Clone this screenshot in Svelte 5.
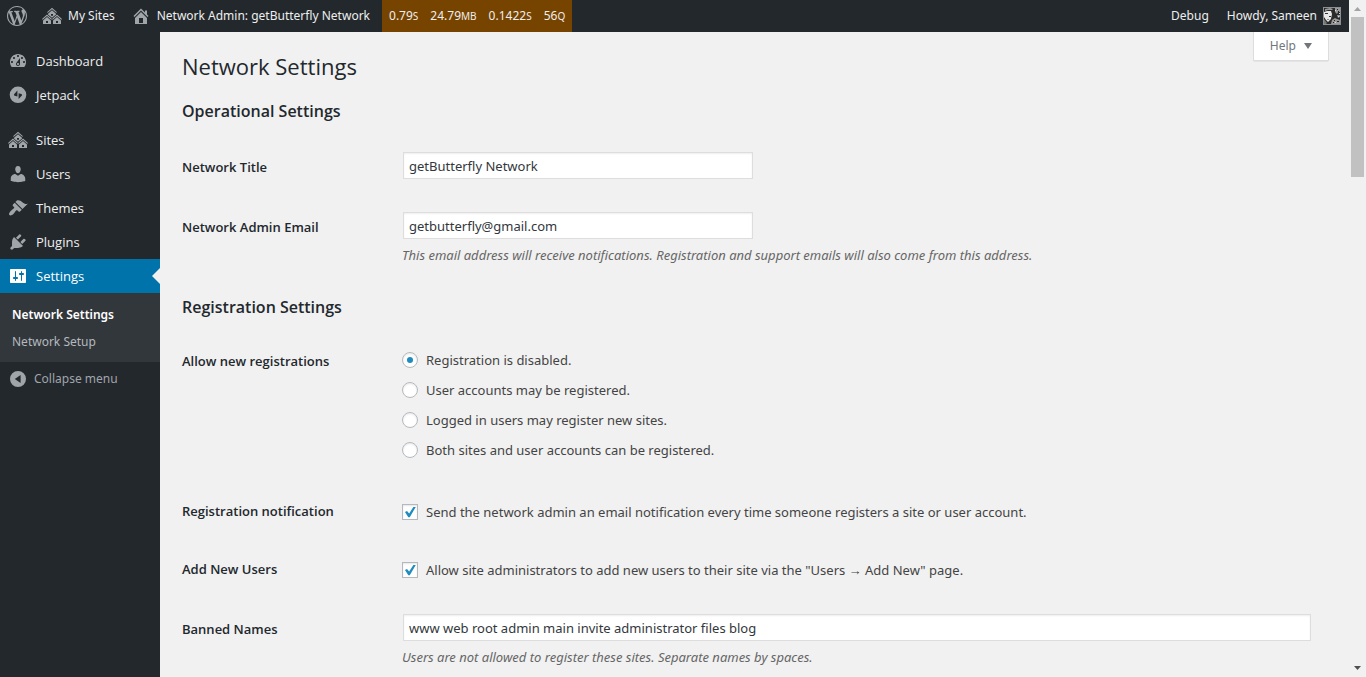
<script>
  const icons = {
    wordpress: 'M20 10c0-5.51-4.49-10-10-10C4.48 0 0 4.49 0 10c0 5.52 4.48 10 10 10 5.51 0 10-4.48 10-10zM7.78 15.37L4.37 6.22c.55-.02 1.17-.08 1.17-.08.5-.06.44-1.13-.06-1.11 0 0-1.45.11-2.37.11-.18 0-.37 0-.58-.01C4.12 2.69 6.87 1.11 10 1.11c2.33 0 4.45.87 6.05 2.34-.68-.11-1.65.39-1.65 1.58 0 .74.45 1.36.9 2.1.35.61.55 1.36.55 2.46 0 1.49-1.4 5-1.4 5l-3.03-8.37c.54-.02.82-.17.82-.17.5-.05.44-1.25-.06-1.22 0 0-1.44.12-2.38.12-.87 0-2.33-.12-2.33-.12-.5-.03-.56 1.2-.06 1.22l.92.08 1.26 3.41zM17.41 10c.24-.64.74-1.87.43-4.25.7 1.29 1.05 2.71 1.05 4.25 0 3.29-1.73 6.24-4.4 7.78.97-2.59 1.94-5.2 2.92-7.78zM6.1 18.09C3.12 16.65 1.11 13.53 1.11 10c0-1.3.23-2.48.72-3.59C3.25 10.3 4.67 14.2 6.1 18.09zm4.03-6.63l2.58 6.98c-.86.29-1.76.45-2.71.45-.79 0-1.57-.11-2.29-.33.81-2.38 1.62-4.74 2.42-7.1z',
    sites: 'M14.27 6.87L10 3.14 5.73 6.87 5 6.14l5-4.38 5 4.38zM14 8.42l-4.05 3.43L6 8.38v-.74l4-3.5 4 3.5v.78zM11 9.7V8H9v1.7h2zm-1.73 4.03L5 10 .73 13.73 0 13l5-4.38L10 13zm10 0L15 10l-4.27 3.73L10 13l5-4.38L20 13zM5 11l4 3.5V18H1v-3.5zm10 0l4 3.5V18h-8v-3.5zm-9 6v-2H4v2h2zm10 0v-2h-2v2h2z',
    home: 'M16 8.5l1.53 1.53-1.06 1.06L10 4.6l-6.47 6.49-1.06-1.06L10 2.5l4 4v-2h2v4zm-6-2.46l6 5.99V18H4v-5.97zM12 17v-5H8v5h4z',
    dashboard: 'M3.76 16h12.48c1.1-1.37 1.76-3.11 1.76-5 0-4.42-3.58-8-8-8s-8 3.58-8 8c0 1.89.66 3.63 1.76 5zM10 4c.55 0 1 .45 1 1s-.45 1-1 1-1-.45-1-1 .45-1 1-1zM6 6c.55 0 1 .45 1 1s-.45 1-1 1-1-.45-1-1 .45-1 1-1zm8 0c.55 0 1 .45 1 1s-.45 1-1 1-1-.45-1-1 .45-1 1-1zm-5.37 5.55L12 7v6c0 1.1-.9 2-2 2s-2-.9-2-2c0-.57.24-1.08.63-1.45zM4 10c.55 0 1 .45 1 1s-.45 1-1 1-1-.45-1-1 .45-1 1-1zm12 0c.55 0 1 .45 1 1s-.45 1-1 1-1-.45-1-1 .45-1 1-1zm-5 3c0-.55-.45-1-1-1s-1 .45-1 1 .45 1 1 1 1-.45 1-1z',
    jetpack: 'M10 1.5a8.3 8.3 0 1 0 0 16.6 8.3 8.3 0 0 0 0-16.6zM9.4 5.6v5.8L6.8 10.7c-.8-.2-1-.9-.7-1.5zM10.6 14V8.2l2.6.7c.8.2 1 .9.7 1.5z',
    users: 'M10 9.25c-2.27 0-2.73-3.44-2.73-3.44C7 4.02 7.82 2 9.97 2c2.16 0 2.98 2.02 2.71 3.81 0 0-.41 3.44-2.68 3.44zm0 2.57L12.72 10c2.39 0 4.52 2.33 4.52 4.53v2.49s-3.65 1.13-7.24 1.13c-3.65 0-7.24-1.13-7.24-1.13v-2.49c0-2.25 1.94-4.48 4.47-4.48z',
    themes: 'M14.48 11.06L7.41 3.99l1.5-1.5c.5-.56 2.3-.47 3.51.32 1.21.8 1.43 1.28 2.91 2.1 1.18.64 2.45 1.26 4.45.85zm-.71.71L6.7 4.7 4.93 6.47c-.39.39-.39 1.02 0 1.41l1.06 1.06c.39.39.39 1.03 0 1.42-.6.6-1.43 1.11-2.21 1.69-.35.26-.7.53-1.01.84C1.43 14.23.4 16.08 1.4 17.07c.99 1 2.84-.03 4.18-1.36.31-.31.58-.66.85-1.02.57-.78 1.08-1.61 1.69-2.21.39-.39 1.02-.39 1.41 0l1.06 1.06c.39.39 1.02.39 1.41 0z',
    plugins: 'M13.11 4.36L9.87 7.6 8 5.73l3.24-3.24c.35-.34 1.05-.2 1.56.32.52.51.66 1.21.31 1.55zm-8 1.77l.91-1.12 9.01 9.01-1.19.84c-.71.71-2.63 1.16-3.82 1.16H6.14L4.9 17.26c-.59.59-1.54.59-2.12 0-.59-.58-.59-1.53 0-2.12l1.24-1.24v-3.88c0-1.13.4-3.19 1.09-3.89zm7.26 3.97l3.24-3.24c.34-.35 1.04-.21 1.55.31.52.51.66 1.21.31 1.55l-3.24 3.25z',
    settings: 'M18 16V4c0-.55-.45-1-1-1H3c-.55 0-1 .45-1 1v12c0 .55.45 1 1 1h14c.55 0 1-.45 1-1zM8 11h1c.55 0 1 .45 1 1s-.45 1-1 1H8v1.5c0 .28-.22.5-.5.5s-.5-.22-.5-.5V13H6c-.55 0-1-.45-1-1s.45-1 1-1h1V5.5c0-.28.22-.5.5-.5s.5.22.5.5V11zm5-2h-1c-.55 0-1-.45-1-1s.45-1 1-1h1V5.5c0-.28.22-.5.5-.5s.5.22.5.5V7h1c.55 0 1 .45 1 1s-.45 1-1 1h-1v5.5c0 .28-.22.5-.5.5s-.5-.22-.5-.5V9z',
    collapse: 'M10 2a8 8 0 1 0 0 16 8 8 0 0 0 0-16zM12.6 6v8L6.8 10z'
  };

  const menu = [
    { label: 'Dashboard', icon: 'dashboard' },
    { label: 'Jetpack', icon: 'jetpack' },
    { label: 'Sites', icon: 'sites', separated: true },
    { label: 'Users', icon: 'users' },
    { label: 'Themes', icon: 'themes' },
    { label: 'Plugins', icon: 'plugins' },
    {
      label: 'Settings',
      icon: 'settings',
      current: true,
      children: ['Network Settings', 'Network Setup']
    }
  ];

  const stats = [
    ['0.79', 'S'],
    ['24.79', 'MB'],
    ['0.1422', 'S'],
    ['56', 'Q']
  ];

  const registrationOptions = [
    ['none', 'Registration is disabled.'],
    ['user', 'User accounts may be registered.'],
    ['blog', 'Logged in users may register new sites.'],
    ['all', 'Both sites and user accounts can be registered.']
  ];

  let title = $state('getButterfly Network');
  let email = $state('getbutterfly@gmail.com');
  let registration = $state('none');
  let notify = $state(true);
  let addUsers = $state(true);
  let banned = $state('www web root admin main invite administrator files blog');
</script>

{#snippet icon(name)}
  <svg class="icon" viewBox="0 0 20 20" aria-hidden="true">
    <path fill-rule="evenodd" d={icons[name]} />
  </svg>
{/snippet}

<div class="window">
  <div class="page">
    <header class="bar">
      <a class="bar-item logo" href="#about" aria-label="About WordPress">{@render icon('wordpress')}</a>
      <a class="bar-item" href="#my-sites">{@render icon('sites')}My Sites</a>
      <a class="bar-item network" href="#network">{@render icon('home')}Network Admin: getButterfly Network</a>
      <a class="bar-item stats" href="#queries">
        {#each stats as [value, unit]}
          <span>{value}<small>{unit}</small></span>
        {/each}
      </a>
      <a class="bar-item push" href="#debug">Debug</a>
      <a class="bar-item" href="#profile">
        Howdy, Sameen
        <svg class="avatar" viewBox="0 0 18 18" aria-hidden="true">
          <rect width="18" height="18" fill="#8c8f93" />
          <rect x="1" y="1" width="16" height="16" fill="#2b2b2b" />
          <path d="M1 5l3-1 4 0 1 3-1 5-3 3-2-2-2-3z" fill="#e8e8e8" />
          <path d="M2 2l5-1 3 1-1 1-4 0-3 1z" fill="#999" />
          <path d="M2 6l3 0v1H2zM6 9h2v1H6zM4 12l2 0-1 1z" fill="#333" />
          <path d="M12 1h5v4h-2l-1 2-2-2zM14 8h3v2l-2 1zM9 13l3-2 2 1 3 1v4H8z" fill="#999" />
          <path d="M1 12l3 4-1 1H1z" fill="#777" />
          <path d="M14 2h1v1h-1zM15 4h1v1h-1zM11 13h1v1h-1zM14 14h2v1h-2zM10 15h1v1h-1z" fill="#222" />
          <path d="M12 3h1v1h-1zM15 9h1v1h-1zM12 15h1v1h-1zM16 6h1v1h-1z" fill="#ddd" />
        </svg>
      </a>
    </header>

    <div class="body">
      <nav class="side" aria-label="Main menu">
        <ul class="menu">
          {#each menu as item}
            <li class:separated={item.separated}>
              <a class="menu-link" class:current={item.current} href="#{item.icon}">
                {@render icon(item.icon)}{item.label}
              </a>
              {#if item.children}
                <ul class="submenu">
                  {#each item.children as child, i}
                    <li><a class:active={i === 0} href="#settings-{i}">{child}</a></li>
                  {/each}
                </ul>
              {/if}
            </li>
          {/each}
        </ul>
        <button class="collapse" type="button">{@render icon('collapse')}Collapse menu</button>
      </nav>

      <main>
        <button class="help" type="button">
          Help
          <svg viewBox="0 0 8 6" aria-hidden="true"><path d="M0 0h8L4 6z" /></svg>
        </button>

        <h1>Network Settings</h1>

        <form>
          <h2>Operational Settings</h2>
          <div class="row">
            <label class="name" for="site-name">Network Title</label>
            <div class="field">
              <input class="text" id="site-name" type="text" bind:value={title} />
            </div>
          </div>
          <div class="row">
            <label class="name" for="admin-email">Network Admin Email</label>
            <div class="field">
              <input class="text" id="admin-email" type="email" bind:value={email} />
              <p>This email address will receive notifications. Registration and support emails will also come from this address.</p>
            </div>
          </div>

          <h2>Registration Settings</h2>
          <div class="row choices group" role="radiogroup" aria-labelledby="registration-name">
            <div class="name" id="registration-name">Allow new registrations</div>
            <div class="field radios">
              {#each registrationOptions as [value, label]}
                <label class="choice">
                  <input type="radio" name="registration" {value} bind:group={registration} />
                  {label}
                </label>
              {/each}
            </div>
          </div>
          <div class="row choices">
            <div class="name">Registration notification</div>
            <div class="field single">
              <label class="choice">
                <input type="checkbox" bind:checked={notify} />
                Send the network admin an email notification every time someone registers a site or user account.
              </label>
            </div>
          </div>
          <div class="row choices">
            <div class="name">Add New Users</div>
            <div class="field single">
              <label class="choice">
                <input type="checkbox" bind:checked={addUsers} />
                Allow site administrators to add new users to their site via the "Users → Add New" page.
              </label>
            </div>
          </div>
          <div class="row">
            <label class="name" for="banned-names">Banned Names</label>
            <div class="field">
              <input class="text wide" id="banned-names" type="text" bind:value={banned} />
              <p>Users are not allowed to register these sites. Separate names by spaces.</p>
            </div>
          </div>
        </form>
      </main>
    </div>
  </div>

  <div class="scroll" aria-hidden="true">
    <svg viewBox="0 0 7 4"><path d="M0 4h7L3.5 0z" fill="#a3a3a3" /></svg>
    <div class="thumb"></div>
    <svg class="down" viewBox="0 0 7 4"><path d="M0 0h7L3.5 4z" fill="#505050" /></svg>
  </div>
</div>

<style>
  :global(body) {
    margin: 0;
    background: #f1f1f1;
  }

  .window {
    display: flex;
    height: 100vh;
    overflow: hidden;
    background: #f1f1f1;
    color: #444;
    font: 13px/20px 'Open Sans', 'Noto Sans', sans-serif;
  }

  .window *,
  .window *::before {
    box-sizing: border-box;
  }

  a {
    color: inherit;
    text-decoration: none;
  }

  button {
    border: 0;
    font: inherit;
    cursor: pointer;
  }

  ul {
    margin: 0;
    padding: 0;
    list-style: none;
  }

  .icon {
    flex: none;
    width: 20px;
    height: 20px;
    fill: #a0a5aa;
  }

  .page {
    display: flex;
    flex: 1;
    flex-direction: column;
    min-width: 0;
  }

  .bar {
    display: flex;
    flex: none;
    height: 32px;
    background: #23282d;
    color: #eee;
    font-family: 'Noto Sans', 'Open Sans', sans-serif;
    font-size: 12px;
  }

  .bar-item {
    display: flex;
    align-items: center;
    gap: 6px;
    padding: 0 8px;
    white-space: nowrap;
  }

  .logo {
    padding: 0 7px;
  }

  .network {
    padding-right: 12px;
  }

  .stats {
    gap: 12px;
    padding: 0 7px;
    background: #740;
  }

  .stats small {
    font-size: 10px;
  }

  .push {
    margin-left: auto;
    padding-right: 10px;
  }

  .avatar {
    width: 18px;
    height: 18px;
  }

  .body {
    display: flex;
    flex: 1;
    min-height: 0;
  }

  .side {
    flex: none;
    width: 160px;
    padding-top: 12px;
    background: #23282d;
    color: #eee;
  }

  .menu-link {
    display: flex;
    position: relative;
    align-items: center;
    gap: 8px;
    height: 34px;
    padding: 0 8px;
  }

  .separated {
    margin-top: 11px;
  }

  .current {
    background: #0073aa;
    color: #fff;
  }

  .current .icon {
    fill: #fff;
  }

  .current::after {
    position: absolute;
    top: 9px;
    right: 0;
    border: 8px solid transparent;
    border-left: 0;
    border-right-color: #f1f1f1;
    content: '';
  }

  .submenu {
    padding: 8px 12px 7px;
    background: #32373c;
    color: #b4b9be;
    font-family: 'Noto Sans', 'Open Sans', sans-serif;
    font-size: 12px;
    line-height: 27px;
  }

  .submenu a {
    display: block;
  }

  .submenu .active {
    color: #fff;
    font-weight: 600;
  }

  .collapse {
    display: flex;
    align-items: center;
    gap: 6px;
    width: 100%;
    height: 34px;
    padding: 0 8px;
    background: none;
    color: #a0a5aa;
    font-family: 'Noto Sans', 'Open Sans', sans-serif;
    font-size: 12px;
  }

  main {
    position: relative;
    flex: 1;
    min-width: 0;
    padding: 20px 38px 0 22px;
    overflow: hidden;
  }

  .help {
    display: flex;
    position: absolute;
    top: 0;
    right: 20px;
    align-items: center;
    gap: 8px;
    height: 29px;
    padding: 0 16px;
    border: 1px solid #ddd;
    border-top: 0;
    background: #fff;
    box-shadow: 0 1px 1px -1px rgba(0, 0, 0, 0.3);
    color: #72777c;
    font-family: 'Noto Sans', 'Open Sans', sans-serif;
    font-size: 12px;
  }

  .help svg {
    width: 8px;
    height: 6px;
    fill: #72777c;
  }

  h1,
  h2 {
    margin: 0;
    color: #23282d;
  }

  h1 {
    margin-bottom: 2px;
    font-size: 22px;
    font-weight: 400;
    line-height: 28px;
  }

  h2 {
    padding: 18px 0;
    font-size: 16px;
    font-weight: 600;
    line-height: 22px;
  }

  .row {
    display: flex;
    min-height: 60px;
    padding: 12px 0 13px;
  }

  .name {
    flex: none;
    width: 220px;
    padding-top: 5px;
    color: #23282d;
    font-weight: 600;
  }

  .field {
    flex: 1;
    min-width: 0;
    font-family: 'Noto Sans', 'Open Sans', sans-serif;
  }

  .text {
    display: block;
    width: 350px;
    height: 27px;
    margin: 0 1px;
    padding: 2px 5px;
    border: 1px solid #ddd;
    background: #fff;
    box-shadow: inset 0 1px 2px rgba(0, 0, 0, 0.07);
    color: #32373c;
    font: inherit;
  }

  .wide {
    width: calc(100% - 1px);
    margin-right: 0;
  }

  p {
    margin: 6px 0 0;
    color: #666;
    font-style: italic;
  }

  .choices {
    min-height: 58px;
    padding-top: 14px;
  }

  .choices .name {
    padding-top: 1px;
  }

  .group {
    padding-bottom: 26px;
  }

  .single {
    padding-top: 2px;
  }

  .radios {
    display: grid;
    gap: 10px;
  }

  .choice {
    display: flex;
    align-items: center;
    gap: 8px;
  }

  .choice input {
    display: grid;
    flex: none;
    place-items: center;
    width: 16px;
    height: 16px;
    margin: 0;
    border: 1px solid #b4b9be;
    background: #fff;
    box-shadow: inset 0 1px 2px rgba(0, 0, 0, 0.1);
    appearance: none;
  }

  .choice input[type='radio'] {
    border-radius: 50%;
  }

  input[type='radio']:checked::before {
    width: 6px;
    height: 6px;
    border-radius: 50%;
    background: #1e8cbe;
    content: '';
  }

  input[type='checkbox']:checked::before {
    width: 12px;
    height: 12px;
    background: #1e8cbe;
    clip-path: polygon(8% 50%, 25% 42%, 43% 62%, 78% 8%, 98% 8%, 48% 94%, 36% 94%);
    content: '';
  }

  .scroll {
    display: flex;
    flex: none;
    flex-direction: column;
    align-items: center;
    width: 17px;
    padding: 7px 0;
  }

  .scroll svg {
    flex: none;
    width: 7px;
    height: 4px;
  }

  .thumb {
    width: 13px;
    height: 160px;
    margin-top: 6px;
    background: #c1c1c1;
  }

  .down {
    margin-top: auto;
  }
</style>
